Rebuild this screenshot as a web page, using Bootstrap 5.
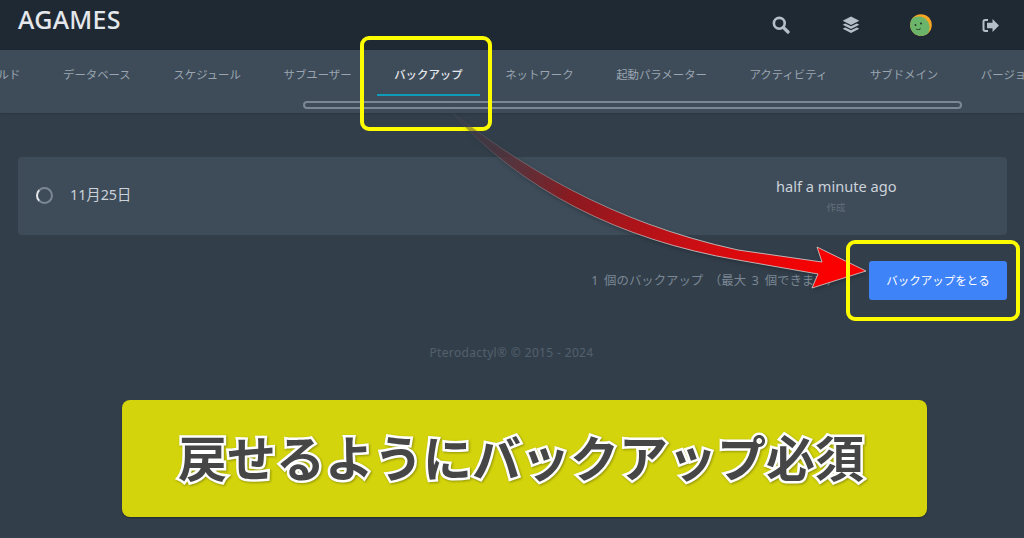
<!DOCTYPE html>
<html lang="ja">
  <head>
    <meta charset="UTF-8" />
    <title>AGAMES - バックアップ</title>
    <link href="https://cdn.jsdelivr.net/npm/bootstrap@5.3.0/dist/css/bootstrap.min.css" rel="stylesheet" />
    <style>
      html, body { height: 100%; }
      body {
        background: #323f4b;
        color: #cbd2d9;
        font-family: "Noto Sans", "Noto Sans CJK JP", sans-serif;
        overflow: hidden;
        position: relative;
      }
      .top-bar { height: 50px; background: #1f2933; padding: 0 0 0 18px; }
      .brand-name { font-size: 25px; font-weight: 500; color: #e4e7eb; letter-spacing: .3px; line-height: 1; padding-bottom: 11px; }
      .top-nav { margin-right: -1.500px; }
      .top-link { width: 70px; height: 50px; color: #b5bfc9; }
      .sub-bar { height: 63px; background: #3e4c59; overflow: hidden; box-shadow: 0 1px 2px rgba(0,0,0,.15); }
      .tab-row { margin-left: -30.800px; width: max-content; gap: 8.600px; }
      .tab-item {
        padding: 14px 17px 0;
        height: 46px;
        color: #9aa5b1;
        font-size: 11.400px;
        line-height: 20px;
        font-family: "Noto Sans CJK JP", sans-serif;
        border-bottom: 2px solid transparent;
        white-space: nowrap;
      }
      .tab-item.is-on { color: #e4e7eb; border-bottom-color: #0e9cb8; font-weight: 500; }
      .scroll-track {
        position: absolute; left: 303px; top: 101px; width: 659px; height: 8px;
        border: 2px solid #7b8794; border-radius: 4px;
      }
      .page-main { padding: 44px 17px 0 18px; }
      .backup-row { height: 78px; background: #3e4c59; border: 0; border-radius: 4px; padding: 0 0 0 18px; }
      .ring { width: 17px; height: 17px; border-radius: 50%; border: 2px solid #7b8794; border-left-color: #e4e7eb; margin-top: -1px; }
      .date-text { font-size: 14.300px; color: #cbd2d9; margin-left: 17px; margin-top: -2px; }
      .time-col { width: 120px; margin-right: 111px; text-align: center; margin-top: -1px; }
      .time-text { font-size: 14.600px; color: #cbd2d9; line-height: 20px; white-space: nowrap; }
      .made-text { font-size: 9.500px; color: #616e7c; line-height: 14px; margin-top: 5px; }
      .action-row { margin-top: 26px; }
      .count-text { font-size: 12.400px; color: #7b8794; margin-right: 30px; white-space: nowrap; margin-top: 2px; word-spacing: 2.500px; }
      .take-btn {
        width: 138px; height: 39px; padding: 0; background: #3f83f8; border: 0; border-radius: 3px;
        color: #fff; font-size: 11.500px; font-family: "Noto Sans CJK JP", sans-serif;
      }
      .foot-text { margin-top: 44px; font-size: 12px; color: #52606d; letter-spacing: .35px; text-align: center; padding-right: 2px; }
      .note-box { position: absolute; border: 4px solid #fdfd00; border-radius: 9px; }
      .note-tab { left: 360px; top: 36px; width: 132px; height: 95px; }
      .note-btn { left: 846px; top: 240px; width: 174px; height: 81px; }
      .curve-art { position: absolute; left: 0; top: 0; pointer-events: none; filter: drop-shadow(1px 2px 2px rgba(0,0,0,.25)); }
      .banner {
        position: absolute; left: 122px; top: 400px; width: 805px; height: 117px;
        background: #d3d40c; border-radius: 8px;
        box-shadow: 0 1px 2px rgba(0,0,0,.35);
        padding: 0 7px 6px 0;
      }
      .banner-text {
        font-family: "Noto Sans CJK JP", sans-serif;
        font-weight: 700;
        font-size: 49px;
        line-height: 1;
        color: #464646;
        -webkit-text-stroke: 5px #fff;
        paint-order: stroke fill;
        white-space: nowrap;
        filter: drop-shadow(1px 1px 1px rgba(0,0,0,.3));
      }
    </style>
  </head>
  <body>
    <header class="top-bar d-flex align-items-center justify-content-between">
      <div class="brand-name">AGAMES</div>
      <nav class="top-nav d-flex">
        <a class="top-link d-flex align-items-center justify-content-center">
          <svg width="18" height="18" viewBox="0 0 18 18"><circle cx="7.300" cy="7.300" r="5.400" fill="none" stroke="currentColor" stroke-width="2.600"/><path d="M11.300 11.300 16 16" stroke="currentColor" stroke-width="3.200" stroke-linecap="round"/></svg>
        </a>
        <a class="top-link d-flex align-items-center justify-content-center">
          <svg width="18" height="18" viewBox="0 0 18 18" fill="currentColor"><path d="M9 .6 17.300 4.700 9 8.900.7 4.700z"/><path d="M3.200 7.400 9 10.300l5.800-2.900 2.500 1.300L9 12.900.7 8.700z"/><path d="M3.200 11.400 9 14.300l5.800-2.900 2.500 1.300L9 17 .7 12.700z"/></svg>
        </a>
        <a class="top-link d-flex align-items-center justify-content-center">
          <svg width="22" height="22" viewBox="0 0 22 22"><defs><clipPath id="faceClip"><circle cx="11" cy="11" r="10.800"/></clipPath></defs><circle cx="11" cy="11" r="10.800" fill="#f5a623"/><circle cx="8.500" cy="13.500" r="11" fill="#6bb56a" clip-path="url(#faceClip)"/><circle cx="5.500" cy="11" r=".9" fill="#22332a"/><circle cx="11" cy="9.500" r="1" fill="#22332a"/><path d="M5.500 14.500c2 1.200 4 .8 5.500-.8-.3 2.500-4 3.300-5.500.8z" fill="#22332a"/></svg>
        </a>
        <a class="top-link d-flex align-items-center justify-content-center">
          <svg width="17" height="15" viewBox="0 0 17 15" fill="currentColor"><path d="M6 1H3.200A2.700 2.700 0 0 0 .5 3.700v7.600A2.700 2.700 0 0 0 3.200 14H6v-2H3.400a.9.900 0 0 1-.9-.9V3.900a.9.900 0 0 1 .9-.9H6z"/><path d="M10.500 1 17 7.500 10.500 14v-3.800H5V4.800h5.500z"/></svg>
        </a>
      </nav>
    </header>

    <div class="sub-bar">
      <nav class="tab-row d-flex">
        <a class="tab-item text-decoration-none">ビルド</a>
        <a class="tab-item text-decoration-none">データベース</a>
        <a class="tab-item text-decoration-none">スケジュール</a>
        <a class="tab-item text-decoration-none">サブユーザー</a>
        <a class="tab-item text-decoration-none is-on">バックアップ</a>
        <a class="tab-item text-decoration-none">ネットワーク</a>
        <a class="tab-item text-decoration-none">起動パラメーター</a>
        <a class="tab-item text-decoration-none">アクティビティ</a>
        <a class="tab-item text-decoration-none">サブドメイン</a>
        <a class="tab-item text-decoration-none">バージョン</a>
      </nav>
    </div>
    <div class="scroll-track"></div>

    <main class="page-main">
      <section class="card backup-row d-flex flex-row align-items-center">
        <div class="ring"></div>
        <div class="date-text flex-grow-1">11月25日</div>
        <div class="time-col">
          <div class="time-text">half a minute ago</div>
          <div class="made-text">作成</div>
        </div>
      </section>
      <div class="action-row d-flex justify-content-end align-items-center">
        <div class="count-text">1 個のバックアップ （最大 3 個できます）</div>
        <button type="button" class="btn btn-primary take-btn">バックアップをとる</button>
      </div>
      <div class="foot-text">Pterodactyl® © 2015 - 2024</div>
    </main>

    <div class="note-box note-tab"></div>
    <svg class="curve-art" width="1024" height="538" viewBox="0 0 1024 538">
      <defs>
        <linearGradient id="redFade" gradientUnits="userSpaceOnUse" x1="450" y1="110" x2="830" y2="270">
          <stop offset="0" stop-color="#3e4652" stop-opacity=".3"/>
          <stop offset=".35" stop-color="#8a1a20"/>
          <stop offset=".7" stop-color="#d00d12"/>
          <stop offset="1" stop-color="#fb0000"/>
        </linearGradient>
        <linearGradient id="edgeFade" gradientUnits="userSpaceOnUse" x1="450" y1="110" x2="700" y2="230">
          <stop offset="0" stop-color="#c9c9c9" stop-opacity="0"/>
          <stop offset="1" stop-color="#d4d4d4" stop-opacity=".8"/>
        </linearGradient>
      </defs>
      <path d="M447 108C520 166 610 222 738 250L822 262 817 247 866 271 812 288 818 274 738 260C620 240 520 190 447 108z" fill="url(#redFade)" stroke="url(#edgeFade)" stroke-width="1" stroke-linejoin="round"/>
    </svg>
    <div class="note-box note-btn"></div>

    <aside class="banner d-flex align-items-center justify-content-center">
      <div class="banner-text">戻せるようにバックアップ必須</div>
    </aside>
  </body>
</html>
